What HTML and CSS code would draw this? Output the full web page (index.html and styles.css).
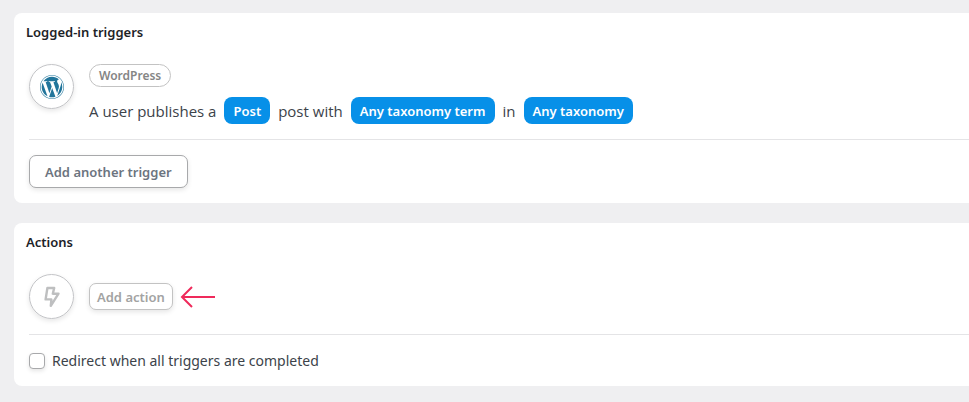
FILE: index.html
```html
<!DOCTYPE html>
<html lang="en">
<head>
<meta charset="utf-8">
<title>Recipe</title>
<link rel="stylesheet" href="styles.css">
</head>
<body>
<main class="recipe">
  <section class="card">
    <h2 class="card-title">Logged-in triggers</h2>
    <div class="item">
      <span class="item-icon">
        <svg class="wp-logo" viewBox="8 8 496 496" aria-hidden="true"><path d="M61.7 169.4l101.5 278C92.2 413 43.3 340.2 43.3 256c0-30.9 6.6-60.1 18.4-86.6zm337.9 75.9c0-26.3-9.4-44.5-17.5-58.7-10.8-17.5-20.9-32.4-20.9-49.9 0-19.6 14.8-37.8 35.7-37.8.9 0 1.8.1 2.8.2-37.9-34.7-88.3-55.9-143.7-55.9-74.3 0-139.7 38.1-177.8 95.9 5 .2 9.7.3 13.7.3 22.2 0 56.7-2.7 56.7-2.7 11.5-.7 12.8 16.2 1.4 17.5 0 0-11.5 1.3-24.3 2l77.5 230.4L249.8 247l-33.1-90.8c-11.5-.7-22.3-2-22.3-2-11.5-.7-10.1-18.2 1.3-17.5 0 0 35.1 2.7 56 2.7 22.2 0 56.7-2.7 56.7-2.7 11.5-.7 12.8 16.2 1.4 17.5 0 0-11.5 1.3-24.3 2l76.9 228.7 21.2-70.9c9-29.4 16-50.5 16-68.7zm-139.9 29.3l-63.8 185.5c19.1 5.6 39.2 8.7 60.1 8.7 24.8 0 48.5-4.3 70.6-12.1-.6-.9-1.1-1.9-1.5-2.9l-65.4-179.2zm183-120.7c.9 6.8 1.4 14 1.4 21.9 0 21.6-4 45.8-16.2 76.2l-65 187.9C426.2 403 468.7 334.5 468.7 256c0-37-9.4-71.8-26-102.1zM504 256c0 136.8-111.3 248-248 248C119.2 504 8 392.7 8 256 8 119.2 119.2 8 256 8c136.7 0 248 111.2 248 248zm-11.4 0c0-130.5-106.2-236.6-236.6-236.6C125.5 19.4 19.4 125.5 19.4 256S125.6 492.6 256 492.6c130.5 0 236.6-106.1 236.6-236.6z"/></svg>
      </span>
      <div class="item-body">
        <span class="tag">WordPress</span>
        <p class="sentence">
          <span>A user publishes a</span>
          <button type="button" class="token">Post</button>
          <span>post with</span>
          <button type="button" class="token">Any taxonomy term</button>
          <span>in</span>
          <button type="button" class="token">Any taxonomy</button>
        </p>
      </div>
    </div>
    <div class="card-footer">
      <button type="button" class="btn">Add another trigger</button>
    </div>
  </section>

  <section class="card">
    <h2 class="card-title">Actions</h2>
    <div class="item item-empty">
      <span class="item-icon">
        <svg class="bolt" viewBox="0 0 16 22" aria-hidden="true"><path d="M3.400 2H10.200L8.800 7.700H14.500L6.800 19.800L7.400 13.400H1.600z"/></svg>
      </span>
      <button type="button" class="btn btn-small">Add action</button>
      <svg class="arrow" viewBox="0 0 36 22" aria-hidden="true"><path d="M35 11H2M12 1L2 11l10 10"/></svg>
    </div>
    <div class="card-footer">
      <label class="option"><input type="checkbox" class="check">Redirect when all triggers are completed</label>
    </div>
  </section>
</main>
</body>
</html>
```

FILE: styles.css
```css
* {
  box-sizing: border-box;
}

body {
  margin: 0;
  background: #efeff1;
  color: #3c434a;
  font-family: "Segoe UI", "Noto Sans", "Open Sans", sans-serif;
  font-size: 15px;
  line-height: 20px;
}

button {
  font-family: inherit;
}

.recipe {
  display: flex;
  flex-direction: column;
  gap: 20px;
  padding: 13px 0 16px 14px;
}

.card {
  padding-left: 15px;
  background: #fff;
  border-radius: 8px 0 0 8px;
}

.card-title {
  margin: 0 0 0 -3px;
  padding: 9px 0 22px;
  color: #1d2327;
  font-size: 13px;
  font-weight: 600;
  line-height: 20px;
}

.item {
  display: flex;
  align-items: flex-start;
  padding-bottom: 15px;
}

.item-empty {
  align-items: center;
}

.item-icon {
  display: flex;
  flex: none;
  align-items: center;
  justify-content: center;
  width: 45px;
  height: 45px;
  margin-right: 15px;
  border: 1px solid #c3c4c7;
  border-radius: 50%;
  box-shadow: 0 2px 5px rgba(0, 0, 0, 0.1);
}

.wp-logo {
  width: 24px;
  height: 24px;
  fill: #21759b;
}

.bolt {
  width: 16px;
  height: 22px;
  fill: none;
  stroke: #bebfc0;
  stroke-width: 2.4;
  stroke-linejoin: round;
}

.tag {
  display: block;
  width: fit-content;
  padding: 0 9px;
  border: 1px solid #c3c3c3;
  border-radius: 12px;
  color: #858585;
  font-size: 12px;
  font-weight: 600;
  line-height: 21px;
}

.sentence {
  display: flex;
  flex-wrap: wrap;
  align-items: center;
  gap: 8px;
  margin: 10px 0 0;
  font-family: "Segoe UI", "Open Sans", "Noto Sans", sans-serif;
}

.token {
  height: 27px;
  padding: 0 9px;
  border: 0;
  border-radius: 8px;
  background: #0790e8;
  color: #fff;
  font-family: "Segoe UI", "Noto Sans", "Open Sans", sans-serif;
  font-size: 13px;
  font-weight: 600;
}

.card-footer {
  padding: 15px 0;
  border-top: 1px solid #e4e4e6;
}

.btn {
  display: block;
  height: 33px;
  padding: 0 15px;
  border: 1px solid #a8a9ab;
  border-radius: 7px;
  background: #fff;
  box-shadow: 0 2px 5px rgba(0, 0, 0, 0.1);
  color: #6c7480;
  font-size: 13px;
  font-weight: 600;
}

.btn-small {
  height: 27px;
  padding: 0 7px;
  border-color: #c3c3c3;
  color: #a3a3a3;
}

.arrow {
  width: 36px;
  height: 22px;
  margin-left: 7px;
  fill: none;
  stroke: #ef2a5b;
  stroke-width: 2;
}

.option {
  display: flex;
  align-items: center;
  gap: 7px;
  font-size: 14px;
  line-height: 21px;
}

.check {
  appearance: none;
  width: 16px;
  height: 16px;
  margin: 0;
  border: 1px solid #a8a9ab;
  border-radius: 4px;
  background: #fff;
  box-shadow: 0 2px 4px rgba(0, 0, 0, 0.1);
}

.check:checked {
  background: #0790e8;
}
```
